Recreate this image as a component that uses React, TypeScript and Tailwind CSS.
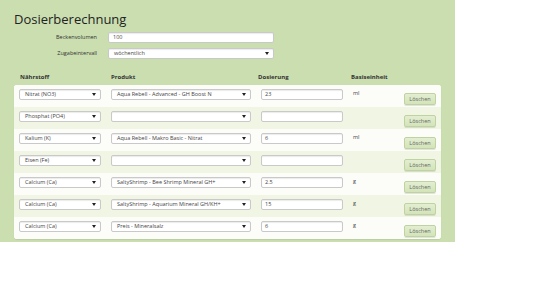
import React from "react";

interface Row {
  naehrstoff: string;
  produkt: string;
  dosierung: string;
  einheit: string;
}

const rows: Row[] = [
  { naehrstoff: "Nitrat (NO3)", produkt: "Aqua Rebell - Advanced - GH Boost N", dosierung: "23", einheit: "ml" },
  { naehrstoff: "Phosphat (PO4)", produkt: "", dosierung: "", einheit: "" },
  { naehrstoff: "Kalium (K)", produkt: "Aqua Rebell - Makro Basic - Nitrat", dosierung: "6", einheit: "ml" },
  { naehrstoff: "Eisen (Fe)", produkt: "", dosierung: "", einheit: "" },
  { naehrstoff: "Calcium (Ca)", produkt: "SaltyShrimp - Bee Shrimp Mineral GH+", dosierung: "2.5", einheit: "g" },
  { naehrstoff: "Calcium (Ca)", produkt: "SaltyShrimp - Aquarium Mineral GH/KH+", dosierung: "15", einheit: "g" },
  { naehrstoff: "Calcium (Ca)", produkt: "Preis - Mineralsalz", dosierung: "6", einheit: "g" },
];

const Arrow = () => (
  <svg width="4" height="3" viewBox="0 0 4 3" className="shrink-0">
    <path d="M0 0 L4 0 L2 3 Z" fill="#222" />
  </svg>
);

const FakeSelect = ({ value, className }: { value: string; className: string }) => (
  <div
    className={`flex items-center justify-between bg-white border border-[#c9c9c9] rounded-[2px] pl-[5px] pr-[4px] text-[5.5px] text-[#444] leading-[9px] shadow-[inset_0_1px_1px_rgba(0,0,0,0.08)] ${className}`}
  >
    <span className="whitespace-nowrap">{value}</span>
    <Arrow />
  </div>
);

const FakeInput = ({ value, className }: { value: string; className: string }) => (
  <div
    className={`flex items-center bg-white border border-[#c9c9c9] rounded-[2px] px-[3px] text-[5.5px] text-[#444] leading-[9px] whitespace-nowrap shadow-[inset_0_1px_1px_rgba(0,0,0,0.08)] ${className}`}
  >
    {value}
  </div>
);

const App: React.FC = () => {
  return (
    <div className="w-[534px] h-[300px] bg-white font-['Open_Sans',sans-serif]">
      <div className="w-[455px] h-[242px] bg-[#cbdeb0] pt-[11px] px-[14px]">
        <h1 className="text-[13px] leading-[16px] text-[#222] font-normal">Dosierberechnung</h1>

        {/* Form */}
        <div className="mt-[5px] flex flex-col gap-[5px]">
          <div className="flex items-center">
            <label className="w-[83px] text-right text-[5.5px] leading-[9px] text-[#333]">Beckenvolumen</label>
            <FakeInput value="100" className="ml-[11px] w-[166px] h-[11px] pl-[4px]" />
          </div>
          <div className="flex items-center">
            <label className="w-[83px] text-right text-[5.5px] leading-[9px] text-[#333]">Zugabeintervall</label>
            <FakeSelect value="wöchentlich" className="ml-[11px] w-[166px] h-[11px]" />
          </div>
        </div>

        {/* Table header */}
        <div className="mt-[14px] flex text-[6px] font-bold text-[#333] leading-[9px]">
          <span className="ml-[6px] w-[91px]">Nährstoff</span>
          <span className="w-[147px]">Produkt</span>
          <span className="w-[93px]">Dosierung</span>
          <span>Basiseinheit</span>
        </div>

        {/* Table */}
        <div className="mt-[3px] w-[427px] bg-[#fbfcf7] rounded-[3px] shadow-[0_1px_1px_rgba(0,0,0,0.08)] overflow-hidden">
          {rows.map((row, i) => (
            <div
              key={i}
              className={`h-[22px] flex items-start pl-[5px] ${i % 2 === 1 ? "bg-[#f1f5e4]" : "bg-[#fcfdf9]"}`}
            >
              <FakeSelect value={row.naehrstoff} className="mt-[4px] w-[82px] h-[11px]" />
              <FakeSelect value={row.produkt} className="mt-[4px] ml-[10px] w-[140px] h-[11px]" />
              <FakeInput value={row.dosierung} className="mt-[4px] ml-[10px] w-[82px] h-[11px]" />
              <span className="mt-[4px] ml-[10px] w-[51px] text-[5.5px] text-[#444] leading-[9px]">{row.einheit}</span>
              <button className="mt-[8px] w-[32px] h-[12px] rounded-[2px] border border-[#bfd3a0] bg-gradient-to-b from-[#e3eed2] to-[#d3e4b8] text-[5.5px] text-[#666] leading-[9px] shadow-[0_1px_0_rgba(0,0,0,0.1)]">
                Löschen
              </button>
            </div>
          ))}
        </div>
      </div>
    </div>
  );
};

export default App;
